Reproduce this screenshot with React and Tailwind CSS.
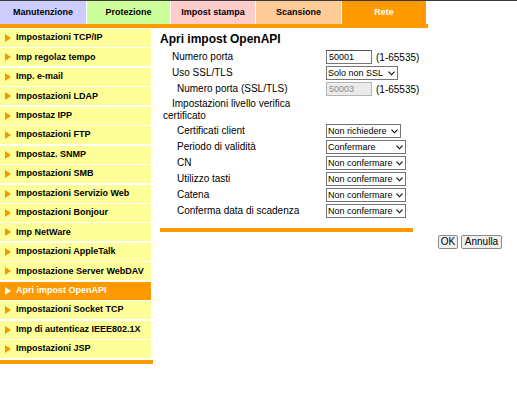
import React from "react";

const tabs = [
  { label: "Manutenzione", w: "w-[86px]", bg: "bg-[#ccccff]", text: "text-black" },
  { label: "Protezione", w: "w-[83px]", bg: "bg-[#ccff99]", text: "text-black" },
  { label: "Impost stampa", w: "w-[84px]", bg: "bg-[#ffcccc]", text: "text-black" },
  { label: "Scansione", w: "w-[85px]", bg: "bg-[#ffcc99]", text: "text-black" },
  { label: "Rete", w: "w-[84px]", bg: "bg-[#ff9900]", text: "text-white" },
];

const menu = [
  "Impostazioni TCP/IP",
  "Imp regolaz tempo",
  "Imp. e-mail",
  "Impostazioni LDAP",
  "Impostaz IPP",
  "Impostazioni FTP",
  "Impostaz. SNMP",
  "Impostazioni SMB",
  "Impostazioni Servizio Web",
  "Impostazioni Bonjour",
  "Imp NetWare",
  "Impostazioni AppleTalk",
  "Impostazione Server WebDAV",
  "Apri impost OpenAPI",
  "Impostazioni Socket TCP",
  "Imp di autenticaz IEEE802.1X",
  "Impostazioni JSP",
];

function Tri({ active }) {
  return (
    <svg width="6" height="8" viewBox="0 0 6 8" className="shrink-0">
      <path d="M0 0 L6 4 L0 8 Z" fill={active ? "#ffffff" : "#f29a00"} />
    </svg>
  );
}

function Select({ value, w }) {
  return (
    <div
      className={`${w} h-[14px] border border-[#767676] bg-white flex items-center justify-between pl-[1px] pr-[2px] text-[9px] leading-none text-black whitespace-nowrap overflow-hidden`}
    >
      <span>{value}</span>
      <svg width="7" height="5" viewBox="0 0 7 5" className="shrink-0">
        <path d="M0.5 0.7 L3.5 3.8 L6.5 0.7" fill="none" stroke="#000" strokeWidth="1.1" />
      </svg>
    </div>
  );
}

function Input({ value, disabled }) {
  return (
    <div
      className={`w-[46px] h-[14px] border ${
        disabled ? "border-[#b5b5b5] bg-[#ebebeb] text-[#8a8a8a]" : "border-[#767676] border-t-[#555] bg-white text-black"
      } flex items-center pl-[2px] text-[9px] leading-none`}
    >
      {value}
    </div>
  );
}

function Row({ label, indent, children }) {
  return (
    <div className="flex h-[16px] items-center">
      <div className={`w-[166px] ${indent} text-[10px] leading-none`}>{label}</div>
      <div className="flex items-center gap-[4px]">{children}</div>
    </div>
  );
}

export default function App() {
  return (
    <div
      className="w-[517px] h-[415px] bg-white text-black overflow-hidden"
      style={{ fontFamily: '"Liberation Sans", Arial, sans-serif' }}
    >
      <div className="h-[1px] bg-[#3a3a3a]" />
      <div className="flex gap-[1px] h-[23px]">
        {tabs.map((t) => (
          <div
            key={t.label}
            className={`${t.w} ${t.bg} ${t.text} flex items-center justify-center text-[9px] font-bold`}
          >
            {t.label}
          </div>
        ))}
      </div>
      <div className="h-[4px] bg-[#ff9900] w-[428px]" />
      <div className="flex pt-[1px]">
        <div className="w-[153px] flex flex-col">
          {menu.map((m) => {
            const active = m === "Apri impost OpenAPI";
            return (
              <div
                key={m}
                className={`w-[151px] h-[18px] mb-[1.45px] flex items-center gap-[5px] pl-[5px] text-[9px] font-bold ${
                  active ? "bg-[#ff9900] text-white" : "bg-[#ffff99] text-black"
                }`}
              >
                <Tri active={active} />
                <span>{m}</span>
              </div>
            );
          })}
          <div className="mt-[1px] h-[4px] bg-[#ff9900]" />
        </div>
        <div className="ml-[7px] w-[357px] flex flex-col">
          <div className="h-[20px] pt-[4px] text-[12px] font-bold leading-none">Apri impost OpenAPI</div>
          <Row label="Numero porta" indent="pl-[12px]">
            <Input value="50001" />
            <span className="text-[10px]">(1-65535)</span>
          </Row>
          <Row label="Uso SSL/TLS" indent="pl-[12px]">
            <Select value="Solo non SSL" w="w-[72px]" />
          </Row>
          <Row label="Numero porta (SSL/TLS)" indent="pl-[17px]">
            <Input value="50003" disabled />
            <span className="text-[10px]">(1-65535)</span>
          </Row>
          <div className="flex py-[1px] pl-[3px]">
            <div className="w-[150px] text-[10px] leading-[12px]">
              <span className="pl-[9px]">Impostazioni livello verifica certificato</span>
            </div>
          </div>
          <Row label="Certificati client" indent="pl-[17px]">
            <Select value="Non richiedere" w="w-[75px]" />
          </Row>
          <Row label="Periodo di validità" indent="pl-[17px]">
            <Select value="Confermare" w="w-[80px]" />
          </Row>
          <Row label="CN" indent="pl-[17px]">
            <Select value="Non confermare" w="w-[80px]" />
          </Row>
          <Row label="Utilizzo tasti" indent="pl-[17px]">
            <Select value="Non confermare" w="w-[80px]" />
          </Row>
          <Row label="Catena" indent="pl-[17px]">
            <Select value="Non confermare" w="w-[80px]" />
          </Row>
          <Row label="Conferma data di scadenza" indent="pl-[17px]">
            <Select value="Non confermare" w="w-[80px]" />
          </Row>
          <div className="mt-[9px] h-[4px] w-[253px] bg-[#ff9900]" />
          <div className="mt-[3px] flex justify-end gap-[3px] w-[342px]">
            <button className="w-[20px] h-[14px] border border-[#8a8a8a] bg-[#efefef] rounded-[2px] text-[10px] leading-none">OK</button>
            <button className="w-[41px] h-[14px] border border-[#8a8a8a] bg-[#efefef] rounded-[2px] text-[10px] leading-none">Annulla</button>
          </div>
        </div>
      </div>
    </div>
  );
}
